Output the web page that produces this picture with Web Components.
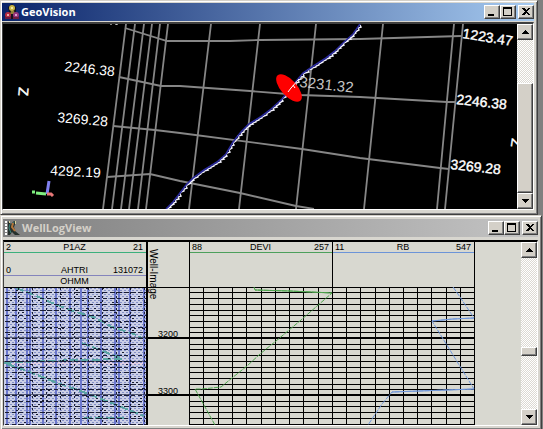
<!DOCTYPE html>
<html lang="en">
<head>
<meta charset="utf-8">
<title>GeoVision</title>
<style>
    body {
        margin: 0;
        background: #808080;
        font-family: "Liberation Sans", Arial, sans-serif;
        overflow: hidden;
    }

    app-window {
        margin-right: 5px;
    }

    app-window[inactive] {
        margin-right: 1px;
    }
</style>
</head>
<body>
    <app-window label="GeoVision">
        <svg slot="icon" width="16" height="16" viewBox="0 0 16 16" aria-hidden="true">
            <path d="M4 3 8 0l4 3v5l3 2v5H1v-5l4-2z" fill="#15131c"/>
            <circle cx="8" cy="4" r="3" fill="#c8b648"/>
            <circle cx="8" cy="4" r="1" fill="#fff6c0"/>
            <path d="M7 7h3l1 3H6z" fill="#8f8138"/>
            <circle cx="4" cy="11" r="3" fill="#b52c40"/>
            <circle cx="4" cy="11" r="1" fill="#ffd0c8"/>
            <circle cx="12" cy="11" r="3" fill="#96357e"/>
            <circle cx="12" cy="11" r="1" fill="#f2c4ea"/>
            <path d="M1 14h6M9 14h6" stroke="#6c1d40" stroke-width="2"/>
        </svg>
        <geo-scene></geo-scene>
        <scroll-bar before="44" thumb="109" after="0"></scroll-bar>
    </app-window>

    <app-window label="WellLogView" inactive>
        <svg slot="icon" width="16" height="16" viewBox="0 0 16 16" aria-hidden="true">
            <path d="M1 1v14" stroke="#fff" stroke-width="2" stroke-dasharray="2 1"/>
            <path d="M3 1 6 4l3-3 2 1-2 5 1 4 5 4h-5l-3-3-2 3H3z" fill="#26302c"/>
            <path d="M5 4 4 8l2 5M9 2 7 6l2 4" fill="none" stroke="#38867c" stroke-width="1"/>
            <path d="M8 3 7 7l3 4" fill="none" stroke="#b5743a" stroke-width="2"/>
            <path d="M10 1h1v3h-1zM4 1h1v2H4z" fill="#ddd6a0"/>
        </svg>
        <well-log></well-log>
        <scroll-bar before="91" thumb="8" after="54"></scroll-bar>
    </app-window>

<script>
const windowTemplate = document.createElement('template');

windowTemplate.innerHTML = `
    <style>
        :host {
            --title-from: #0a246a;
            --title-to: #a6caf0;
            --title-color: #fff;
            --frame-padding: 2px 3px 4px 1px;
            --title-gap: 1px;
            --client-top: #404040;

            display: block;
            box-sizing: border-box;
            padding: var(--frame-padding);
            background: #d8d6cf;
            border: 1px solid;
            border-color: #d4d0c8 #404040 #404040 #d4d0c8;
            box-shadow: inset 1px 1px #fff, inset -1px -1px #808080;
        }

        :host([inactive]) {
            --title-from: #808080;
            --title-to: #c4c4c4;
            --title-color: #d4d0c8;
            --frame-padding: 3px 3px 3px 2px;
            --title-gap: 3px;
            --client-top: #000;
        }

        header {
            display: flex;
            align-items: center;
            height: 18px;
            margin-bottom: var(--title-gap);
            padding-left: 2px;
            background: linear-gradient(to right, var(--title-from), var(--title-to));
        }

        h1 {
            flex: 1;
            margin: 0 0 0 1px;
            color: var(--title-color);
            font: bold 11px/18px "Open Sans", "Noto Sans", sans-serif;
        }

        .buttons {
            display: flex;
        }

        button {
            width: 16px;
            height: 14px;
            padding: 0;
            background: #d4d0c8;
            border: 1px solid;
            border-color: #fff #404040 #404040 #fff;
            box-shadow: inset -1px -1px #808080;
        }

        button:last-child {
            margin-left: 2px;
        }

        button svg {
            display: block;
            margin: 0 auto;
        }

        .client {
            display: flex;
            border: 1px solid;
            border-top-width: 2px;
            border-color: var(--client-top) #fff #fff #404040;
        }
    </style>

    <header>
        <slot name="icon"></slot>
        <h1></h1>
        <div class="buttons">
            <button type="button" aria-label="Minimize">
                <svg width="12" height="12" shape-rendering="crispEdges"><path d="M2 8h6v2H2z"/></svg>
            </button>
            <button type="button" aria-label="Maximize">
                <svg width="12" height="12" shape-rendering="crispEdges"><path fill-rule="evenodd" d="M1 1h9v9H1zM2 3v6h7V3z"/></svg>
            </button>
            <button type="button" aria-label="Close">
                <svg width="12" height="12" shape-rendering="crispEdges"><path d="M2 2h2l2 2 2-2h2L7 5.5 10 9H8L6 7 4 9H2l3-3.5z"/></svg>
            </button>
        </div>
    </header>
    <div class="client"><slot></slot></div>
`;

class AppWindow extends HTMLElement {
    constructor() {
        super();

        this.rootNode = this.attachShadow({ mode: 'open' });
        this.rootNode.appendChild(windowTemplate.content.cloneNode(true));
    }

    connectedCallback() {
        this.rootNode.querySelector('h1').textContent = this.getAttribute('label');
    }
}

const scrollTemplate = document.createElement('template');

scrollTemplate.innerHTML = `
    <style>
        :host {
            display: flex;
            flex: none;
            flex-direction: column;
            width: 16px;
            background: repeating-conic-gradient(#fff 0 25%, #dcd9d2 0 50%) 0 0 / 2px 2px;
        }

        button,
        .thumb {
            box-sizing: border-box;
            background: #d4d0c8;
            border: 1px solid;
            border-color: #fff #404040 #404040 #fff;
            box-shadow: inset -1px -1px #808080;
        }

        button {
            flex: none;
            height: 16px;
            padding: 0;
        }

        button svg {
            display: block;
            margin: 0 auto;
        }
    </style>

    <button type="button" aria-label="Scroll up">
        <svg width="14" height="14" shape-rendering="crispEdges"><path d="M3 9h8L7 5z"/></svg>
    </button>
    <div class="before"></div>
    <div class="thumb"></div>
    <div class="after"></div>
    <button type="button" aria-label="Scroll down">
        <svg width="14" height="14" shape-rendering="crispEdges"><path d="M3 5h8L7 9z"/></svg>
    </button>
`;

class ScrollBar extends HTMLElement {
    constructor() {
        super();

        this.rootNode = this.attachShadow({ mode: 'open' });
        this.rootNode.appendChild(scrollTemplate.content.cloneNode(true));
    }

    connectedCallback() {
        // the three parts share the free height by weight
        ['before', 'thumb', 'after'].forEach(part => {
            this.rootNode.querySelector('.' + part).style.flex = `${this.getAttribute(part)} 0 0`;
        });
    }
}

const sceneTemplate = document.createElement('template');

sceneTemplate.innerHTML = `
    <style>
        :host {
            display: block;
            flex: 1;
            min-width: 0;
            background: #000;
        }

        svg {
            display: block;
            width: 100%;
            height: 185px;
        }

        text {
            fill: #fff;
            font-family: "Liberation Sans", Arial, sans-serif;
            font-size: 14px;
        }

        .near text {
            stroke: #fff;
            stroke-width: 0.4;
        }

        .depth {
            fill: #c4c4c4;
            font-size: 15px;
        }

        .grid {
            fill: none;
            stroke: #868686;
            stroke-width: 1.8;
        }
    </style>

    <svg viewBox="3 24 514 185" preserveAspectRatio="xMidYMid slice">
        <g class="grid">
            <path d="M126 24 103 209M135 24 112 209M144 24 121 209M152 24 129 209M160 24 138 209M168 24 146 209"/>
            <path d="M211 24 189 209M260 24 239 209M316 24 296 209M383 24 364 209M454 24 437 209M463 24 445 209"/>
            <path d="M125 28 167 41H230L260 40 360 39 461 36"/>
            <path d="M119 77 161 86 180 86 250 91 300 95 360 97 447 102H456"/>
            <path d="M113 126 155 130 180 133 302 149 360 158 440 168 449 169"/>
            <path d="M107 177 150 174 180 181 240 193 296 206 314 209"/>
        </g>
        <path d="M110 24h2M115 24h2v1" fill="none" stroke="#fff"/>
        <g>
            <text transform="translate(64 71) rotate(6)">2246.38</text>
            <text transform="translate(57 122) rotate(5)">3269.28</text>
            <text transform="translate(50 175) rotate(3)">4292.19</text>
        </g>
        <g class="near">
            <text transform="translate(462 38) rotate(9)">1223.47</text>
            <text transform="translate(456 104) rotate(6)">2246.38</text>
            <text transform="translate(450 169) rotate(6)">3269.28</text>
            <text transform="translate(19 87) rotate(95)">Z</text>
            <text transform="translate(512 138) rotate(98)">Z</text>
        </g>
        <g class="well"></g>
        <ellipse cx="289" cy="88" rx="17" ry="8" fill="#f00" transform="rotate(48 289 88)"/>
        <path d="M299 79 291 88 288 92M293 85l2 3" fill="none" stroke="#fff"/>
        <text class="depth" transform="translate(299 87) rotate(6)">3231.32</text>
        <g fill="none" stroke-width="3">
            <path d="M47 194 49 181" stroke="#8080f0"/>
            <path d="M36 193 46 194M32 192h3" stroke="#80f080"/>
            <path d="M47 194 51 194 53 196" stroke="#e87878"/>
        </g>
    </svg>
`;

class GeoScene extends HTMLElement {
    constructor() {
        super();

        this.rootNode = this.attachShadow({ mode: 'open' });
        this.rootNode.appendChild(sceneTemplate.content.cloneNode(true));
    }

    connectedCallback() {
        const path = [
            [360, 24], [353, 34], [343, 43], [335, 51], [326, 58], [312, 67], [303, 73], [293, 85],
            [282, 99], [270, 110], [262, 116], [249, 124], [241, 132], [233, 142], [226, 154],
            [217, 162], [204, 170], [193, 178], [186, 185], [180, 193], [173, 202], [166, 209]
        ];
        const points = [];

        // white teeth run along the lower side of the blue well path
        for (let i = 1; i < path.length; i++) {
            const [x0, y0] = path[i - 1];
            const [x1, y1] = path[i];
            const steps = Math.round(Math.hypot(x1 - x0, y1 - y0) / 2);

            for (let s = 0; s < steps; s++) {
                const t = s / steps;
                const tooth = s % 2 ? 2 : 0;
                points.push(`${Math.round(x0 + (x1 - x0) * t) + tooth},${Math.round(y0 + (y1 - y0) * t) + 1}`);
            }
        }

        this.rootNode.querySelector('.well').innerHTML = `
            <polyline points="${points.join(' ')}" fill="none" stroke="#f4f4ff" stroke-width="1.4"/>
            <polyline points="${path.join(' ')}" fill="none" stroke="#2a2a9c" stroke-width="1.6"/>`;
    }
}

const scaleTemplate = document.createElement('template');

scaleTemplate.innerHTML = `
    <style>
        :host {
            display: grid;
            grid-template-columns: 1fr auto 1fr;
            padding: 0 3px 0 2px;
            border-bottom: 1px solid var(--scale-color, transparent);
            font-size: 9px;
            line-height: 10px;
        }

        .max {
            text-align: right;
        }
    </style>

    <span class="min"></span>
    <span class="name"></span>
    <span class="max"></span>
`;

class LogScale extends HTMLElement {
    constructor() {
        super();

        this.rootNode = this.attachShadow({ mode: 'open' });
        this.rootNode.appendChild(scaleTemplate.content.cloneNode(true));
    }

    connectedCallback() {
        ['min', 'name', 'max'].forEach(part => {
            this.rootNode.querySelector('.' + part).textContent = this.getAttribute(part);
        });
    }
}

const logTemplate = document.createElement('template');

logTemplate.innerHTML = `
    <style>
        :host {
            display: grid;
            flex: 1;
            grid-template-columns: 144fr 42fr 143fr 142fr 46fr;
            grid-template-rows: 45px 138px;
            min-width: 0;
            background: #d8d8d0;
            color: #000;
        }

        .image-track { grid-column: 1; }
        .depth-track { grid-column: 2; }
        .devi-track { grid-column: 3; }
        .rb-track { grid-column: 4; }

        .head {
            grid-row: 1;
            border-right: 1px solid #000;
        }

        .head.image-track {
            border-right-width: 2px;
        }

        .image-track log-scale:nth-child(2) {
            margin-top: 12px;
        }

        .well-label {
            grid-row: 1 / 3;
            justify-self: start;
            padding-top: 7px;
            writing-mode: vertical-rl;
            font-size: 10px;
            line-height: 10px;
        }

        .plot {
            display: block;
            width: 100%;
            height: 100%;
            grid-row: 2;
        }

        .plot text {
            font-size: 9px;
        }
    </style>

    <div class="head image-track">
        <log-scale min="2" name="P1AZ" max="21" style="--scale-color: #3cb07c"></log-scale>
        <log-scale min="0" name="AHTRI" max="131072" style="--scale-color: #8484bc"></log-scale>
        <log-scale min="" name="OHMM" max=""></log-scale>
    </div>
    <div class="head depth-track"></div>
    <div class="head devi-track">
        <log-scale min="88" name="DEVI" max="257" style="--scale-color: #4ca05c"></log-scale>
    </div>
    <div class="head rb-track">
        <log-scale min="11" name="RB" max="547" style="--scale-color: #6c94d8"></log-scale>
    </div>
    <div class="well-label depth-track">Well-Image</div>

    <svg class="plot image image-track" viewBox="0 0 144 138" preserveAspectRatio="none" shape-rendering="crispEdges"></svg>
    <svg class="plot depth-track" viewBox="0 0 42 138" preserveAspectRatio="xMinYMin slice">
        <path d="M0 0h42v1H0zM0 50h42v2H0zM0 107h42v2H0zM41 0h1v138h-1z" shape-rendering="crispEdges"/>
        <text x="10" y="50">3200</text>
        <text x="10" y="107">3300</text>
    </svg>
    <svg class="plot devi devi-track" viewBox="0 0 143 138" preserveAspectRatio="none"></svg>
    <svg class="plot rb rb-track" viewBox="0 0 142 138" preserveAspectRatio="none"></svg>
`;

class WellLog extends HTMLElement {
    constructor() {
        super();

        this.rootNode = this.attachShadow({ mode: 'open' });
        this.rootNode.appendChild(logTemplate.content.cloneNode(true));
    }

    connectedCallback() {
        this.renderImage();
        this.renderPlot('.devi', 143, '#4ea44e', 'M64 0 65 3 100 4 142 6 111 33 86 54 70 67 57 79 42 91 31 100 12 102 5 102 15 120 25 138', 'M65 3 100 4 142 6');
        this.renderPlot('.rb', 142, '#6f96da', 'M120 0 127 10 141 31 120 32 99 34 141 102 59 105 49 117 35 138', 'M141 31 120 32 99 34M141 102 59 105');
    }

    // depth rows: ten to every 57 px, the hundreds drawn thick
    rows() {
        const rows = [];

        for (let k = -8; k <= 15; k++) {
            rows.push(Math.round(51 + k * 5.7));
        }

        return rows;
    }

    renderPlot(selector, width, color, curve, solid) {
        let grid = `M0 0h${width}v1H0zM0 50h${width}v2H0zM0 107h${width}v2H0z`;

        this.rows().forEach(y => {
            grid += `M0 ${y}h${width}v1H0z`;
        });

        for (let i = 1; i <= 10; i++) {
            grid += `M${Math.round(i * width / 10) - 1} 0h1v138h-1z`;
        }

        this.rootNode.querySelector(selector).innerHTML = `
            <path d="${grid}" shape-rendering="crispEdges"/>
            <path d="${curve}" fill="none" stroke="${color}" stroke-dasharray="5 1"/>
            <path d="${solid}" fill="none" stroke="${color}"/>`;
    }

    renderImage() {
        const stripes = [2, 11, 22, 25, 38, 51, 65, 76, 83, 96, 110, 114, 125, 139];
        let seed = 7;
        let speckles = '';
        let dark = '';

        const random = () => {
            seed = (seed * 16807) % 2147483647;
            return seed / 2147483647;
        };

        for (let y = 1; y < 138; y += 2) {
            for (let x = 1; x < 142; x += 4) {
                const dx = x + y % 4;
                speckles += `M${dx} ${y}h2v1h-2z`;
                if (random() > 0.92) {
                    dark += `M${dx} ${y}h2v1h-2z`;
                }
            }
        }

        this.rows().forEach(y => {
            for (let x = 1; x < 142; x += 7) {
                const length = random() > 0.4 ? 5 : 4;
                dark += `M${x} ${y}h${length}v1h-${length}z`;
            }
        });

        for (let x = 14; x < 142; x += 14) {
            for (let y = 1; y < 138; y += 4) {
                dark += `M${x} ${y}h1v2h-1z`;
            }
        }

        this.rootNode.querySelector('.image').innerHTML = `
            <path d="M0 0h143v138H0z" fill="#ccd0e6"/>
            <path d="M0 74h143v4H0z" fill="#e0cfe2"/>
            <path d="${speckles}" fill="#8490c6"/>
            <path d="${stripes.map(x => `M${x} 0h2v138h-2z`).join('')}" fill="#6c78cc"/>
            <path d="M12 1 28 7 46 15 66 23 92 31 108 40 130 47 138 51M78 56 96 63 119 72M0 76 14 75 40 74 119 72M3 77 26 85 48 94 74 103 100 113 120 121 140 129M80 131h40" fill="none" stroke="#5aa4a4" stroke-width="2" stroke-dasharray="8 3"/>
            <path d="${dark}" fill="#181c34"/>
            <path d="M0 50h143v1H0zM0 74h143v1H0zM0 107h143v1H0z" fill="#181c34" fill-opacity="0.6"/>
            <path d="M0 0h144v1H0zM142 0h2v138h-2z"/>`;
    }
}

customElements.define('app-window', AppWindow);
customElements.define('scroll-bar', ScrollBar);
customElements.define('geo-scene', GeoScene);
customElements.define('log-scale', LogScale);
customElements.define('well-log', WellLog);
</script>
</body>
</html>
